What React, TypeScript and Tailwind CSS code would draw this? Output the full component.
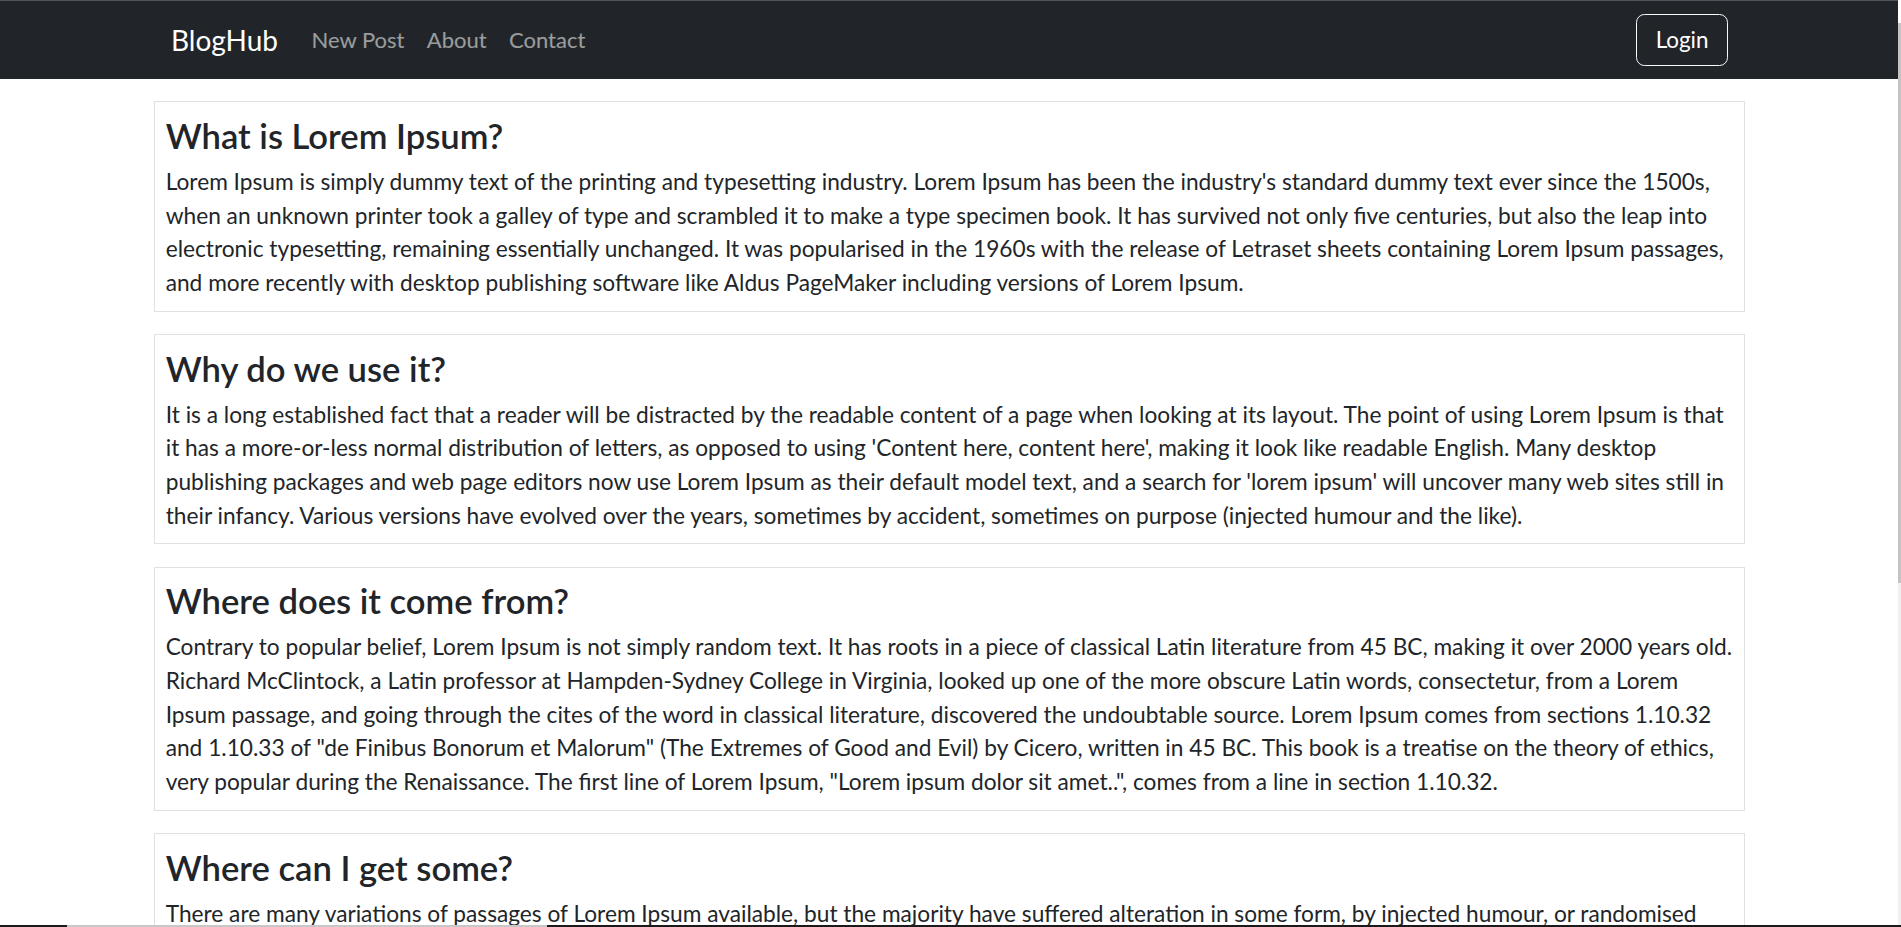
// each post body is kept as the lines the reference wraps it into
const posts = [
  {
    title: 'What is Lorem Ipsum?',
    lines: [
      "Lorem Ipsum is simply dummy text of the printing and typesetting industry. Lorem Ipsum has been the industry's standard dummy text ever since the 1500s,",
      'when an unknown printer took a galley of type and scrambled it to make a type specimen book. It has survived not only five centuries, but also the leap into',
      'electronic typesetting, remaining essentially unchanged. It was popularised in the 1960s with the release of Letraset sheets containing Lorem Ipsum passages,',
      'and more recently with desktop publishing software like Aldus PageMaker including versions of Lorem Ipsum.',
    ],
  },
  {
    title: 'Why do we use it?',
    lines: [
      'It is a long established fact that a reader will be distracted by the readable content of a page when looking at its layout. The point of using Lorem Ipsum is that',
      "it has a more-or-less normal distribution of letters, as opposed to using 'Content here, content here', making it look like readable English. Many desktop",
      "publishing packages and web page editors now use Lorem Ipsum as their default model text, and a search for 'lorem ipsum' will uncover many web sites still in",
      'their infancy. Various versions have evolved over the years, sometimes by accident, sometimes on purpose (injected humour and the like).',
    ],
  },
  {
    title: 'Where does it come from?',
    lines: [
      'Contrary to popular belief, Lorem Ipsum is not simply random text. It has roots in a piece of classical Latin literature from 45 BC, making it over 2000 years old.',
      'Richard McClintock, a Latin professor at Hampden-Sydney College in Virginia, looked up one of the more obscure Latin words, consectetur, from a Lorem',
      'Ipsum passage, and going through the cites of the word in classical literature, discovered the undoubtable source. Lorem Ipsum comes from sections 1.10.32',
      'and 1.10.33 of "de Finibus Bonorum et Malorum" (The Extremes of Good and Evil) by Cicero, written in 45 BC. This book is a treatise on the theory of ethics,',
      'very popular during the Renaissance. The first line of Lorem Ipsum, "Lorem ipsum dolor sit amet..", comes from a line in section 1.10.32.',
    ],
  },
  {
    title: 'Where can I get some?',
    lines: [
      'There are many variations of passages of Lorem Ipsum available, but the majority have suffered alteration in some form, by injected humour, or randomised',
      "words which don't look even slightly believable. If you are going to use a passage of Lorem Ipsum, you need to be sure there isn't anything embarrassing hidden in",
      'the middle of text. All the Lorem Ipsum generators on the Internet tend to repeat predefined chunks as necessary, making this the first true generator on the',
      'Internet. It uses a dictionary of over 200 Latin words, combined with a handful of model sentence structures, to generate Lorem Ipsum which looks reasonable. The',
      'generated Lorem Ipsum is therefore always free from repetition, injected humour, or non-characteristic words etc.',
    ],
  },
];

const links = ['New Post', 'About', 'Contact'];

export default function App() {
  return (
    <div className="flex h-[927px] flex-col overflow-hidden bg-white font-['Lato',sans-serif] text-[#212529]">
      <div className="flex min-h-0 flex-1">
        <div className="flex min-w-0 flex-1 flex-col">
          {/* navbar */}
          <nav className="h-[79px] shrink-0 border-t border-[#505357] bg-[#212529]">
            <div className="mx-auto flex h-full w-[1562px] items-center justify-between">
              <div className="flex items-center">
                <a className="mr-[22.4px] pl-[3px] text-[28px] leading-[42px] text-white">BlogHub</a>
                <ul className="flex">
                  {links.map((link) => (
                    <li key={link}>
                      <a className="block px-[11.2px] text-[22px] leading-[33.6px] text-white/55">{link}</a>
                    </li>
                  ))}
                </ul>
              </div>
              <button className="mr-[2px] rounded-[8.4px] border border-[#f8f9fa] px-[18.5px] py-[8.4px] text-[22.4px] leading-[33.6px] text-white">
                Login
              </button>
            </div>
          </nav>

          {/* posts */}
          <main className="mx-auto w-[1591px] pb-[22.4px]">
            {posts.map((post) => (
              <div key={post.title} className="mt-[22.4px] border border-[#dee2e6] p-[11.2px]">
                <h4 className="mb-[8.5px] pt-[1.5px] text-[34.6px] font-semibold leading-[41.5px]">{post.title}</h4>
                <p className="text-[22.7px] leading-[33.6px]">
                  {post.lines.map((line, i) => (
                    <span key={i} className="block whitespace-nowrap">
                      {line}
                    </span>
                  ))}
                </p>
              </div>
            ))}
          </main>
        </div>

        {/* thin scrollbar */}
        <div className="flex w-[3px] shrink-0 flex-col bg-[#f0f0f0]">
          <div className="h-[23px] bg-white" />
          <div className="h-[560px] bg-[#c4c4c4]" />
        </div>
      </div>

      {/* bottom edge */}
      <div className="flex h-[2px] shrink-0 bg-[#1a1a1a]">
        <div className="w-[67px]" />
        <div className="w-[480px] bg-[#c8c8c8]" />
      </div>
    </div>
  );
}
